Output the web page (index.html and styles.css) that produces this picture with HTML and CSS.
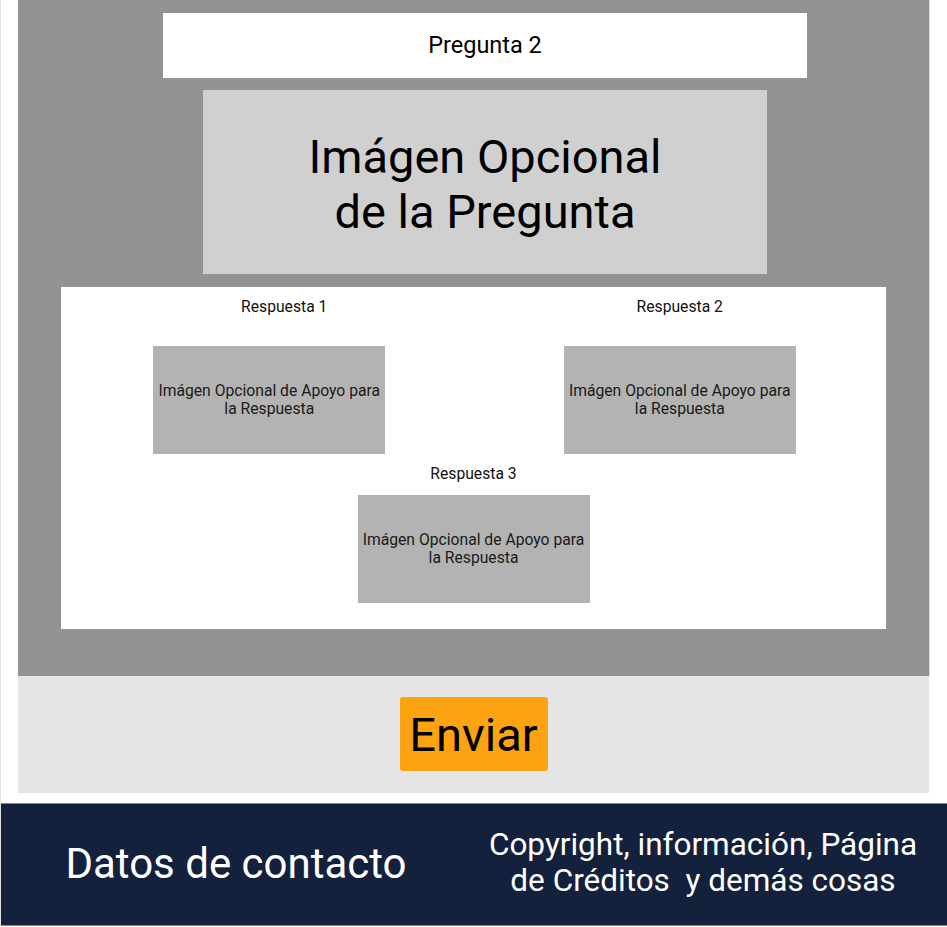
FILE: index.html
```html
<!DOCTYPE html>
<html lang="es">
<head>
<meta charset="utf-8">
<title>Pregunta 2</title>
<link rel="stylesheet" href="styles.css">
</head>
<body>
<div class="page">
  <main class="quiz">
    <div class="question">Pregunta 2</div>
    <div class="question-image">Imágen Opcional<br>de la Pregunta</div>
    <div class="answers">
      <div class="answer answer--first">
        <div class="answer-label answer-label--shifted">Respuesta 1</div>
        <div class="answer-image">Imágen Opcional de Apoyo para<br>la Respuesta</div>
      </div>
      <div class="answer">
        <div class="answer-label">Respuesta 2</div>
        <div class="answer-image">Imágen Opcional de Apoyo para<br>la Respuesta</div>
      </div>
      <div class="answer answer--wide">
        <div class="answer-label">Respuesta 3</div>
        <div class="answer-image">Imágen Opcional de Apoyo para<br>la Respuesta</div>
      </div>
    </div>
  </main>
  <div class="submit-bar">
    <button class="submit-button" type="button">Enviar</button>
  </div>
  <footer class="footer">
    <div class="footer-contact">Datos de contacto</div>
    <div class="footer-info">Copyright, información, Página<br>de Créditos&nbsp; y demás cosas</div>
  </footer>
</div>
</body>
</html>
```

FILE: styles.css
```css
* {
  box-sizing: border-box;
}

html, body {
  margin: 0;
  padding: 0;
  background: #ffffff;
}

body {
  font-family: Roboto, "Liberation Sans", sans-serif;
  color: #000000;
}

.page {
  width: 947px;
  min-height: 927px;
  border-left: 1px solid #e2e2e2;
  display: flex;
  flex-direction: column;
}

.quiz {
  margin: 0 17px 0 17px;
  background: #939393;
  padding: 13px 0 47px;
  display: flex;
  flex-direction: column;
  border-right: 1px solid #d8d8d8;
}

.question {
  margin-left: 145px;
  width: 644px;
  height: 65px;
  background: #ffffff;
  display: flex;
  align-items: center;
  justify-content: center;
  font-size: 23.5px;
  padding-bottom: 2px;
}

.question-image {
  margin: 12px 0 0 185px;
  width: 564px;
  height: 184px;
  background: #d0d0d0;
  display: flex;
  align-items: center;
  justify-content: center;
  text-align: center;
  font-size: 47px;
  line-height: 55px;
  padding-top: 3px;
}

.answers {
  margin: 13px 0 0 43px;
  width: 825px;
  height: 342px;
  background: #ffffff;
  padding: 10px 0 0;
  display: grid;
  grid-template-columns: 1fr 1fr;
  row-gap: 10px;
  align-content: start;
}

.answer {
  display: flex;
  flex-direction: column;
  align-items: center;
  gap: 29px;
}

.answer--first {
  padding-left: 4px;
}

.answer--wide {
  grid-column: 1 / span 2;
  gap: 11px;
}

.answer-label {
  font-size: 15.7px;
  line-height: 20px;
  color: #111111;
}

.answer-label--shifted {
  margin-left: 30px;
}

.answer-image {
  width: 232px;
  height: 108px;
  background: #b3b3b3;
  display: flex;
  align-items: center;
  justify-content: center;
  text-align: center;
  font-size: 15.7px;
  line-height: 18px;
  color: #1a1a1a;
}

.submit-bar {
  margin: 0 18px 0 17px;
  height: 117px;
  background: #e5e5e5;
  display: flex;
  align-items: center;
  justify-content: center;
}

.submit-button {
  width: 148px;
  height: 74px;
  border: none;
  border-radius: 3px;
  background: #fca311;
  font-family: Roboto, "Liberation Sans", sans-serif;
  font-size: 47px;
  color: #000000;
  padding: 0;
  margin-top: -1px;
}

.footer {
  margin-top: 10px;
  height: 123px;
  background: #14213d;
  border-top: 1px solid #7d8491;
  border-bottom: 1px solid #7d8491;
  display: grid;
  grid-template-columns: 1fr 1fr;
  align-items: center;
  padding-right: 10px;
  color: #ffffff;
  text-align: center;
}

.footer-contact {
  font-size: 42px;
  padding-bottom: 2px;
  padding-left: 2px;
}

.footer-info {
  font-size: 31.5px;
  line-height: 36px;
  padding-bottom: 4px;
}
```
